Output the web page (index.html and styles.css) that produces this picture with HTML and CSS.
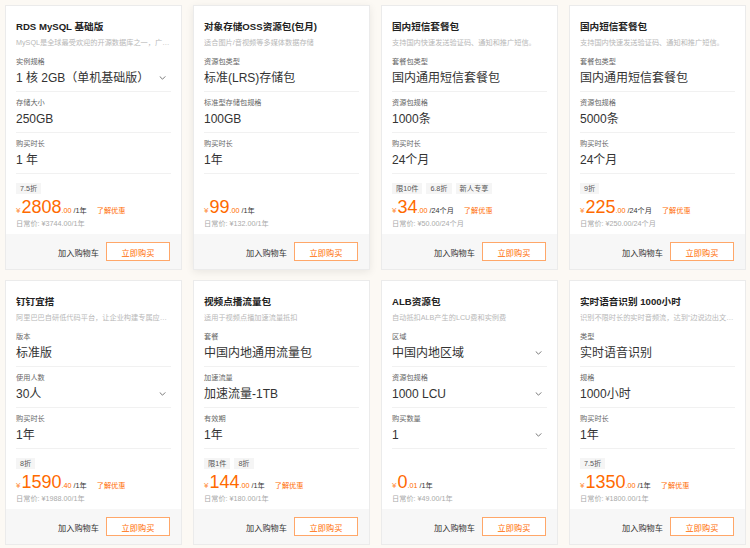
FILE: index.html
```html
<!DOCTYPE html>
<html lang="zh-CN">
<head>
<meta charset="UTF-8">
<title>云产品套餐</title>
<link rel="stylesheet" href="styles.css">
</head>
<body>
<div class="grid">

    <!-- RDS -->
    <div class="card">
        <div class="body">
            <div class="title">RDS MySQL 基础版</div>
            <div class="desc">MySQL是全球最受欢迎的开源数据库之一，广泛应用于各类场景</div>
            <div class="field">
                <div class="label">实例规格</div>
                <div class="value">1 核 2GB（单机基础版）<svg class="chev" viewBox="0 0 8 5"><polyline points="0.5,0.5 4,4 7.5,0.5"/></svg></div>
            </div>
            <div class="field">
                <div class="label">存储大小</div>
                <div class="value">250GB</div>
            </div>
            <div class="field">
                <div class="label">购买时长</div>
                <div class="value">1 年</div>
            </div>
            <div class="tags"><span class="tag">7.5折</span></div>
            <div class="price"><span class="yen">¥</span><span class="int">2808</span><span class="dec">.00</span><span class="unit">/1年</span><a class="promo">了解优惠</a></div>
            <div class="orig">日常价: ¥3744.00/1年</div>
        </div>
        <div class="foot"><span class="cart">加入购物车</span><button class="buy">立即购买</button></div>
    </div>

    <!-- OSS -->
    <div class="card hover">
        <div class="body">
            <div class="title">对象存储OSS资源包(包月)</div>
            <div class="desc">适合图片/音视频等多媒体数据存储</div>
            <div class="field">
                <div class="label">资源包类型</div>
                <div class="value">标准(LRS)存储包</div>
            </div>
            <div class="field">
                <div class="label">标准型存储包规格</div>
                <div class="value">100GB</div>
            </div>
            <div class="field">
                <div class="label">购买时长</div>
                <div class="value">1年</div>
            </div>
            <div class="tags"></div>
            <div class="price"><span class="yen">¥</span><span class="int">99</span><span class="dec">.00</span><span class="unit">/1年</span></div>
            <div class="orig">日常价: ¥132.00/1年</div>
        </div>
        <div class="foot"><span class="cart">加入购物车</span><button class="buy">立即购买</button></div>
    </div>

    <!-- SMS 1000 -->
    <div class="card">
        <div class="body">
            <div class="title">国内短信套餐包</div>
            <div class="desc">支持国内快速发送验证码、通知和推广短信。</div>
            <div class="field">
                <div class="label">套餐包类型</div>
                <div class="value">国内通用短信套餐包</div>
            </div>
            <div class="field">
                <div class="label">资源包规格</div>
                <div class="value">1000条</div>
            </div>
            <div class="field">
                <div class="label">购买时长</div>
                <div class="value">24个月</div>
            </div>
            <div class="tags"><span class="tag">限10件</span><span class="tag">6.8折</span><span class="tag">新人专享</span></div>
            <div class="price"><span class="yen">¥</span><span class="int">34</span><span class="dec">.00</span><span class="unit">/24个月</span><a class="promo">了解优惠</a></div>
            <div class="orig">日常价: ¥50.00/24个月</div>
        </div>
        <div class="foot"><span class="cart">加入购物车</span><button class="buy">立即购买</button></div>
    </div>

    <!-- SMS 5000 -->
    <div class="card">
        <div class="body">
            <div class="title">国内短信套餐包</div>
            <div class="desc">支持国内快速发送验证码、通知和推广短信。</div>
            <div class="field">
                <div class="label">套餐包类型</div>
                <div class="value">国内通用短信套餐包</div>
            </div>
            <div class="field">
                <div class="label">资源包规格</div>
                <div class="value">5000条</div>
            </div>
            <div class="field">
                <div class="label">购买时长</div>
                <div class="value">24个月</div>
            </div>
            <div class="tags"><span class="tag">9折</span></div>
            <div class="price"><span class="yen">¥</span><span class="int">225</span><span class="dec">.00</span><span class="unit">/24个月</span><a class="promo">了解优惠</a></div>
            <div class="orig">日常价: ¥250.00/24个月</div>
        </div>
        <div class="foot"><span class="cart">加入购物车</span><button class="buy">立即购买</button></div>
    </div>

    <!-- 钉钉宜搭 -->
    <div class="card">
        <div class="body">
            <div class="title">钉钉宜搭</div>
            <div class="desc">阿里巴巴自研低代码平台，让企业构建专属应用更简单</div>
            <div class="field">
                <div class="label">版本</div>
                <div class="value">标准版</div>
            </div>
            <div class="field">
                <div class="label">使用人数</div>
                <div class="value">30人<svg class="chev" viewBox="0 0 8 5"><polyline points="0.5,0.5 4,4 7.5,0.5"/></svg></div>
            </div>
            <div class="field">
                <div class="label">购买时长</div>
                <div class="value">1年</div>
            </div>
            <div class="tags"><span class="tag">8折</span></div>
            <div class="price"><span class="yen">¥</span><span class="int">1590</span><span class="dec">.40</span><span class="unit">/1年</span><a class="promo">了解优惠</a></div>
            <div class="orig">日常价: ¥1988.00/1年</div>
        </div>
        <div class="foot"><span class="cart">加入购物车</span><button class="buy">立即购买</button></div>
    </div>

    <!-- 视频点播 -->
    <div class="card">
        <div class="body">
            <div class="title">视频点播流量包</div>
            <div class="desc">适用于视频点播加速流量抵扣</div>
            <div class="field">
                <div class="label">套餐</div>
                <div class="value">中国内地通用流量包</div>
            </div>
            <div class="field">
                <div class="label">加速流量</div>
                <div class="value">加速流量-1TB</div>
            </div>
            <div class="field">
                <div class="label">有效期</div>
                <div class="value">1年</div>
            </div>
            <div class="tags"><span class="tag">限1件</span><span class="tag">8折</span></div>
            <div class="price"><span class="yen">¥</span><span class="int">144</span><span class="dec">.00</span><span class="unit">/1年</span><a class="promo">了解优惠</a></div>
            <div class="orig">日常价: ¥180.00/1年</div>
        </div>
        <div class="foot"><span class="cart">加入购物车</span><button class="buy">立即购买</button></div>
    </div>

    <!-- ALB -->
    <div class="card">
        <div class="body">
            <div class="title">ALB资源包</div>
            <div class="desc">自动抵扣ALB产生的LCU费和实例费</div>
            <div class="field">
                <div class="label">区域</div>
                <div class="value">中国内地区域<svg class="chev" viewBox="0 0 8 5"><polyline points="0.5,0.5 4,4 7.5,0.5"/></svg></div>
            </div>
            <div class="field">
                <div class="label">资源包规格</div>
                <div class="value">1000 LCU<svg class="chev" viewBox="0 0 8 5"><polyline points="0.5,0.5 4,4 7.5,0.5"/></svg></div>
            </div>
            <div class="field">
                <div class="label">购买数量</div>
                <div class="value">1<svg class="chev" viewBox="0 0 8 5"><polyline points="0.5,0.5 4,4 7.5,0.5"/></svg></div>
            </div>
            <div class="tags"></div>
            <div class="price"><span class="yen">¥</span><span class="int">0</span><span class="dec">.01</span><span class="unit">/1年</span></div>
            <div class="orig">日常价: ¥49.00/1年</div>
        </div>
        <div class="foot"><span class="cart">加入购物车</span><button class="buy">立即购买</button></div>
    </div>

    <!-- 语音识别 -->
    <div class="card">
        <div class="body">
            <div class="title">实时语音识别 1000小时</div>
            <div class="desc">识别不限时长的实时音频流，达到“边说边出文字”的效果</div>
            <div class="field">
                <div class="label">类型</div>
                <div class="value">实时语音识别</div>
            </div>
            <div class="field">
                <div class="label">规格</div>
                <div class="value">1000小时</div>
            </div>
            <div class="field">
                <div class="label">购买时长</div>
                <div class="value">1年</div>
            </div>
            <div class="tags"><span class="tag">7.5折</span></div>
            <div class="price"><span class="yen">¥</span><span class="int">1350</span><span class="dec">.00</span><span class="unit">/1年</span><a class="promo">了解优惠</a></div>
            <div class="orig">日常价: ¥1800.00/1年</div>
        </div>
        <div class="foot"><span class="cart">加入购物车</span><button class="buy">立即购买</button></div>
    </div>

</div>
</body>
</html>
```

FILE: styles.css
```css
body {
    margin: 0;
    background-color: #fcf9f4;
    font-family: "Liberation Sans", "Noto Sans CJK SC", sans-serif;
    color: #333;
}

.grid {
    display: grid;
    grid-template-columns: repeat(4, 1fr);
    grid-auto-rows: 265px;
    gap: 10px 11px;
    padding: 5px 4px 0 5px;
}

/* card */
.card {
    display: flex;
    flex-direction: column;
    background-color: #fff;
    border: 1px solid #ebebeb;
    overflow: hidden;
}

.card.hover {
    box-shadow: 0 2px 8px rgba(0, 0, 0, 0.08);
}

.body {
    padding: 14px 10px 0;
}

.title {
    font-size: 9.6px;
    font-weight: bold;
    line-height: 14px;
    color: #222;
}

.desc {
    margin-top: 4px;
    font-size: 7.2px;
    line-height: 10px;
    color: #b8b8b8;
    white-space: nowrap;
    overflow: hidden;
    text-overflow: ellipsis;
}

/* fields */
.field {
    padding: 6px 0 4px;
    border-bottom: 1px solid #f1f1f1;
}

.desc + .field {
    margin-top: 3px;
}

.label {
    font-size: 7.2px;
    line-height: 10px;
    color: #666;
    margin-bottom: 2px;
}

.value {
    display: flex;
    justify-content: space-between;
    align-items: center;
    font-size: 12px;
    line-height: 18px;
    color: #333;
    white-space: nowrap;
}

.chev {
    width: 7px;
    height: 4px;
    margin-right: 5px;
    fill: none;
    stroke: #555;
    stroke-width: 1;
}

/* tags + price */
.tags {
    display: flex;
    gap: 4px;
    height: 11px;
    margin-top: 9px;
}

.tag {
    padding: 0 4px;
    background-color: #f5f5f5;
    font-size: 7.2px;
    line-height: 11px;
    color: #555;
}

.price {
    margin-top: 3px;
    height: 20px;
    line-height: 20px;
    white-space: nowrap;
    color: #ff6a00;
}

.yen {
    font-size: 8px;
    color: #ff8c3a;
    margin-right: 1px;
}

.int {
    font-size: 18px;
}

.dec {
    font-size: 7.2px;
}

.unit {
    margin-left: 2px;
    font-size: 7.2px;
    color: #333;
}

.promo {
    margin-left: 10px;
    font-size: 7.2px;
    color: #ff6a00;
    cursor: pointer;
}

.orig {
    margin-top: 2px;
    font-size: 7.2px;
    line-height: 10px;
    color: #aaa;
}

/* footer */
.foot {
    margin-top: auto;
    height: 35px;
    flex-shrink: 0;
    display: flex;
    justify-content: flex-end;
    align-items: center;
    gap: 7px;
    padding: 0 11px;
    background-color: #f7f7f7;
}

.cart {
    font-size: 8.2px;
    color: #333;
}

.buy {
    width: 64px;
    height: 19px;
    padding: 0;
    border: 1px solid #ffa769;
    background-color: #fff;
    color: #ff6a00;
    font-family: inherit;
    font-size: 8.2px;
    cursor: pointer;
}
```
